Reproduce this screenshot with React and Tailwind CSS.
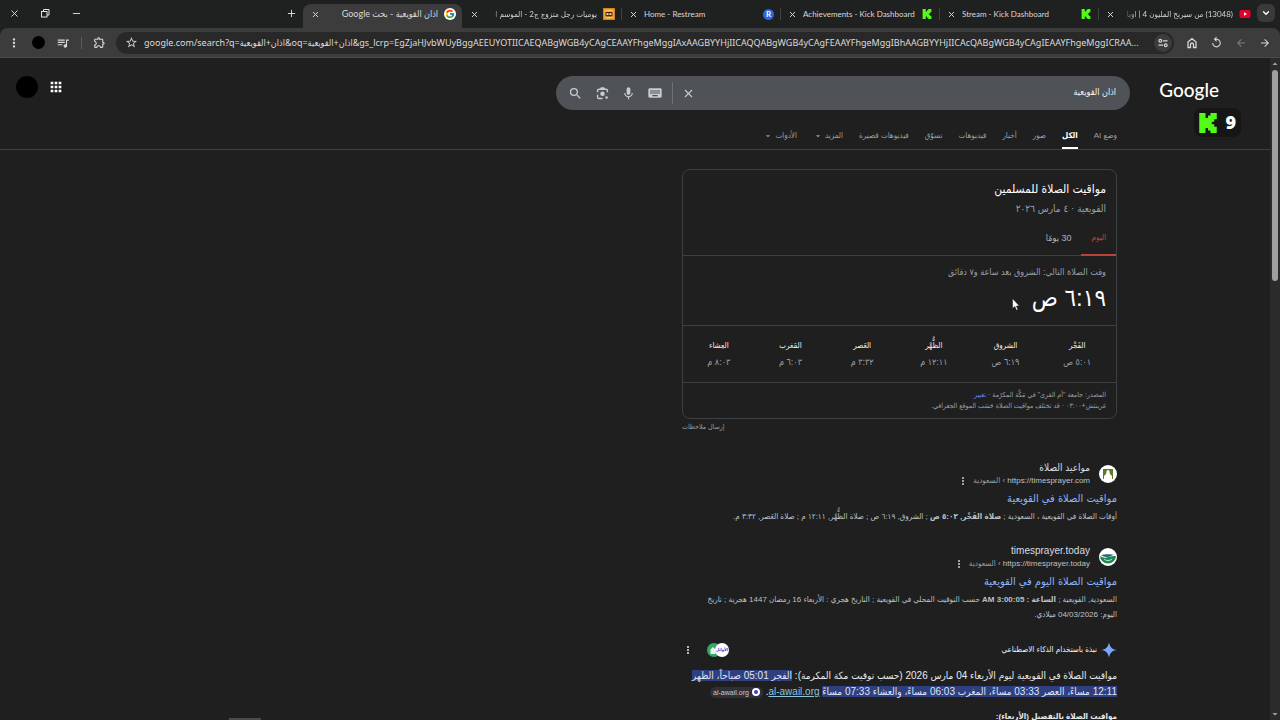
import { Plus, Minus, X, ChevronDown } from "lucide-react";
import { FcGoogle } from "react-icons/fc";
import {
  MdApps,
  MdArrowBack,
  MdArrowDropDown,
  MdArrowDropUp,
  MdArrowForward,
  MdKeyboard,
  MdMic,
  MdMoreVert,
  MdOutlineExtension,
  MdQueueMusic,
  MdReplay,
  MdSearch,
  MdStarBorder,
} from "react-icons/md";

const URL_TEXT =
  "google.com/search?q=اذان+القويعية&oq=اذان+القويعية&gs_lcrp=EgZjaHJvbWUyBggAEEUYOTIICAEQABgWGB4yCAgCEAAYFhgeMggIAxAAGBYYHjIICAQQABgWGB4yCAgFEAAYFhgeMggIBhAAGBYYHjIICAcQABgWGB4yCAgIEAAYFhgeMggICRAA...";

const TABS = [
  { title: "(13048) من سيربح المليون 4 | اوبا", dir: "rtl", icon: "youtube", fade: true },
  { title: "Stream - Kick Dashboard", dir: "ltr", icon: "kick" },
  { title: "Achievements - Kick Dashboard", dir: "ltr", icon: "kick" },
  { title: "Home - Restream", dir: "ltr", icon: "restream" },
  { title: "يوميات رجل متزوج ج2 - الموسم ا", dir: "rtl", icon: "show", fade: true },
  { title: "اذان القويعية - بحث Google", dir: "rtl", icon: "google", active: true },
];

const FILTERS = [
  { label: "وضع AI" },
  { label: "الكل", active: true },
  { label: "صور" },
  { label: "أخبار" },
  { label: "فيديوهات" },
  { label: "تسوّق" },
  { label: "فيديوهات قصيرة" },
  { label: "المزيد", menu: true },
  { label: "الأدوات", menu: true },
];

const PRAYERS = [
  { name: "الفَجْر", time: "٥:٠١ ص" },
  { name: "الشروق", time: "٦:١٩ ص" },
  { name: "الظُّهْر", time: "١٢:١١ م" },
  { name: "العَصر", time: "٣:٣٢ م" },
  { name: "المَغرب", time: "٦:٠٣ م" },
  { name: "العِشاء", time: "٨:٠٣ م" },
];

function KickLogo({ className }) {
  return (
    <svg viewBox="0 0 14 16" className={className} fill="#53fc18" aria-hidden="true">
      <path d="M0 0h5v4h2V2h2V0h5v5h-2v2h-2v2h2v2h2v5H9v-2H7v-2H5v4H0z" />
    </svg>
  );
}

function Favicon({ name }) {
  if (name === "google") {
    return (
      <span className="flex size-3 shrink-0 items-center justify-center rounded-full bg-white">
        <FcGoogle size={10} />
      </span>
    );
  }
  if (name === "kick") return <KickLogo className="mx-px h-[10px] w-[10px] shrink-0" />;
  if (name === "youtube") {
    return (
      <svg viewBox="0 0 12 12" className="size-3 shrink-0" aria-hidden="true">
        <rect x="0.5" y="2" width="11" height="8" rx="2" fill="#e8002d" />
        <path d="M5 4.3v3.4L8 6z" fill="#fff" />
      </svg>
    );
  }
  if (name === "restream") {
    return (
      <span className="flex size-[11px] shrink-0 items-center justify-center rounded-full bg-[#2a66e8] text-[8px] leading-none font-bold text-white">
        R
      </span>
    );
  }
  return (
    <svg viewBox="0 0 12 12" className="size-3 shrink-0" aria-hidden="true">
      <rect width="12" height="12" rx="1" fill="#f2b632" />
      <rect x="0.8" y="0.8" width="10.4" height="10.4" fill="none" stroke="#c9541c" strokeWidth="0.7" />
      <circle cx="6" cy="6" r="4.2" fill="#f7d35c" />
      <rect x="2.4" y="3.8" width="7.2" height="4.6" rx="1" fill="#5b1d12" />
      <path d="M3.5 5.2h2v1.8h-2zM6.5 5.2h2v1.8h-2z" fill="#ffe9a8" />
    </svg>
  );
}

function BrowserTab({ tab, divider }) {
  return (
    <div
      className={
        tab.active
          ? "flex h-6 w-[159px] min-w-0 items-center gap-[6px] rounded-t-lg bg-[#3c3c3c] pr-[6px] pb-1 pl-2 text-[9px]"
          : "relative flex h-6 w-[159px] min-w-0 items-center gap-[6px] pr-[6px] pb-1 pl-2 text-[8px]"
      }
    >
      <Favicon name={tab.icon} />
      <span
        dir={tab.dir}
        className={
          tab.fade
            ? "min-w-0 flex-1 mask-l-from-85% leading-3 whitespace-nowrap text-[#d0d0d0]"
            : "min-w-0 flex-1 leading-3 whitespace-nowrap text-[#d9d9d9]"
        }
      >
        {tab.title}
      </span>
      <button type="button" aria-label="إغلاق علامة التبويب" className="text-[#dedede]">
        <X size={9} strokeWidth={2.5} />
      </button>
      {divider && <span className="absolute top-1 left-0 h-3 w-px bg-[#414141]" />}
    </div>
  );
}

function TabStrip() {
  return (
    <div className="flex h-7 items-end bg-[#1f2020] pr-[5px]">
      <button
        type="button"
        aria-label="البحث في علامات التبويب"
        className="mb-[6px] flex size-[18px] shrink-0 items-center justify-center rounded-md bg-[#3a3a3a] text-white"
      >
        <ChevronDown size={10} strokeWidth={3} />
      </button>
      <div className="flex min-w-0">
        {TABS.map((tab, i) => (
          <BrowserTab key={tab.title} tab={tab} divider={i < 4} />
        ))}
      </div>
      <button type="button" aria-label="علامة تبويب جديدة" className="mr-[6px] mb-[9px] text-[#e3e3e3]">
        <Plus size={11} strokeWidth={2} />
      </button>
      <div className="mr-auto mb-[9px] flex items-center gap-5 pl-[9px] text-[#e3e3e3]">
        <button type="button" aria-label="تصغير">
          <Minus size={11} strokeWidth={2} />
        </button>
        <button type="button" aria-label="استعادة">
          <svg viewBox="0 0 11 11" className="size-[11px]" fill="none" stroke="currentColor" aria-hidden="true">
            <rect x="1.5" y="3.5" width="5.5" height="5.5" />
            <path d="M3.5 3.5v-2h5.5v5.5H7" />
          </svg>
        </button>
        <button type="button" aria-label="إغلاق">
          <X size={11} strokeWidth={2} />
        </button>
      </div>
    </div>
  );
}

function Toolbar() {
  return (
    <div className="bg-[#1f2020]">
      <div className="flex h-[30px] items-center rounded-t-lg border-b border-[#4b4b4b] bg-[#3c3c3c] pr-[10px] pl-[7px] text-[#d6d6d6]">
        <div className="flex items-center gap-3 pl-3">
          <button type="button" aria-label="التالي" className="-mr-px">
            <MdArrowForward size={12} />
          </button>
          <button type="button" aria-label="السابق" className="text-[#7c7c7c]">
            <MdArrowBack size={12} />
          </button>
          <button type="button" aria-label="إعادة التحميل">
            <MdReplay size={13} />
          </button>
          <button type="button" aria-label="الصفحة الرئيسية">
            <svg viewBox="0 0 12 12" className="size-3" fill="none" stroke="currentColor" strokeWidth="1.3" aria-hidden="true">
              <path d="M2 5l4-3.300L10 5v5.500H7.500v-3a1.500 1.500 0 0 0-3 0v3H2z" />
            </svg>
          </button>
        </div>
        <div className="flex h-[22px] min-w-0 flex-1 items-center gap-[6px] rounded-full bg-[#282828] pr-[2px] pl-[9px]">
          <button
            type="button"
            aria-label="معلومات الموقع"
            className="flex size-[18px] shrink-0 items-center justify-center rounded-full bg-[#3c3c3c]"
          >
            <svg viewBox="0 0 10 10" className="size-[10px]" fill="none" stroke="currentColor" strokeWidth="1.2" aria-hidden="true">
              <circle cx="2.3" cy="2.8" r="1.4" />
              <path d="M5 2.8h4.5M0.5 7.2H5" />
              <circle cx="7.7" cy="7.2" r="1.4" />
            </svg>
          </button>
          <input
            dir="ltr"
            aria-label="شريط العناوين"
            defaultValue={URL_TEXT}
            className="h-4 min-w-0 flex-1 bg-transparent font-['Noto_Sans','DejaVu_Sans_Condensed','DejaVu_Sans',sans-serif] text-[9px] text-ellipsis text-[#dcdcdc] outline-none"
          />
          <button type="button" aria-label="إضافة إشارة">
            <MdStarBorder size={13} />
          </button>
        </div>
        <div className="flex items-center gap-[10px] pr-[10px]">
          <button type="button" aria-label="الإضافات">
            <MdOutlineExtension size={13} />
          </button>
          <span className="mx-px h-3 w-px bg-[#5c5c5c]" />
          <button type="button" aria-label="الوسائط">
            <MdQueueMusic size={14} />
          </button>
          <button type="button" aria-label="الملف الشخصي" className="mx-px size-[13px] rounded-full bg-black" />
          <button type="button" aria-label="القائمة">
            <MdMoreVert size={14} />
          </button>
        </div>
      </div>
    </div>
  );
}

function LensIcon() {
  return (
    <svg viewBox="0 0 24 24" className="size-[15px]" fill="currentColor" aria-hidden="true">
      <path d="M3 10V7.5A3.5 3.5 0 0 1 6.500 4H8l1.500-2h5L16 4h1.500A3.500 3.500 0 0 1 21 7.500V10h-2.200V7.500A1.300 1.300 0 0 0 17.500 6.200h-11A1.300 1.300 0 0 0 5.200 7.500V10zM3 14h2.200v3.500a1.300 1.300 0 0 0 1.300 1.300H12V21H6.500A3.500 3.500 0 0 1 3 17.500z" />
      <circle cx="12" cy="12.500" r="3.600" />
      <circle cx="18.500" cy="18.500" r="2" />
    </svg>
  );
}

function SearchHeader() {
  return (
    <header className="relative border-b border-[#3c4043]">
      <div className="flex items-center pt-[18px]">
        <div className="w-[140px] shrink-0 pr-[51px] pb-[6px]">
          <a href="#home" dir="ltr" className="block text-right font-[Lato] text-[19px] leading-7 font-medium text-white">
            Google
          </a>
        </div>
        <form className="flex h-[34px] w-[574px] items-center rounded-full bg-[#4f5357] pr-[14px] pl-3 text-[#c9ccd0]">
          <input
            type="text"
            aria-label="بحث"
            defaultValue="اذان القويعية"
            className="min-w-0 flex-1 bg-transparent text-[9px] text-[#f1f1f1] outline-none"
          />
          <button type="button" aria-label="محو">
            <X size={13} strokeWidth={2} />
          </button>
          <span className="mx-[9px] h-[22px] w-px bg-[#6d7175]" />
          <div className="flex items-center gap-3">
            <button type="button" aria-label="أدوات الإدخال">
              <MdKeyboard size={16} />
            </button>
            <button type="button" aria-label="البحث الصوتي" className="-mx-px">
              <MdMic size={15} />
            </button>
            <button type="button" aria-label="البحث بالصور">
              <LensIcon />
            </button>
            <button type="submit" aria-label="بحث Google">
              <MdSearch size={15} />
            </button>
          </div>
        </form>
        <div className="mr-auto mb-3 flex items-center gap-[10px] pl-4 text-white">
          <button type="button" aria-label="تطبيقات Google">
            <MdApps size={16} />
          </button>
          <button type="button" aria-label="الحساب" className="size-[22px] rounded-full bg-black" />
        </div>
      </div>
      <nav className="flex gap-4 pt-[18px] pr-[153px] text-[8px] leading-4 text-[#9aa0a6]">
        {FILTERS.map((f) => (
          <a
            key={f.label}
            href="#filter"
            className={
              f.active
                ? "border-b-2 border-white pb-[3px] font-bold text-white"
                : "flex items-center border-b-2 border-transparent pb-[3px]"
            }
          >
            {f.label}
            {f.menu && <MdArrowDropDown size={10} className="mr-[2px]" />}
          </a>
        ))}
      </nav>
      <div
        dir="ltr"
        className="absolute top-[50px] right-[29px] flex h-[29px] items-center gap-2 rounded-lg bg-[#151615] px-[5px] font-['Open_Sans'] text-[18px] font-extrabold text-white"
      >
        <KickLogo className="h-5 w-[18px]" />9
      </div>
    </header>
  );
}

function PrayerCard() {
  return (
    <section>
      <div className="rounded-lg border border-[#3c4043]">
        <div className="px-[10px] pt-[9px]">
          <h2 className="text-[12px] leading-5 text-white">مواقيت الصلاة للمسلمين</h2>
          <p className="text-[10px] leading-5 text-[#9aa0a6]">القويعية · ٤ مارس ٢٠٢٦</p>
        </div>
        <div className="flex border-b border-[#3c4043] pt-[9px] leading-5">
          <button type="button" className="-mb-px border-b-2 border-[#b8433c] px-[10px] pb-[6px] text-[8px] text-[#d93b33]">
            اليوم
          </button>
          <button type="button" className="-mb-px border-b-2 border-transparent px-[10px] pb-[6px] text-[9px] text-[#b0b4b8]">
            30 يومًا
          </button>
        </div>
        <div className="border-b border-[#3c4043] px-[10px] pt-[6px] pb-[11px]">
          <p className="text-[9px] leading-5 text-[#9aa0a6]">وقت الصلاة التالي: الشروق بعد ساعة و٧ دقائق</p>
          <p className="text-[24px] leading-8 text-white">٦:١٩ ص</p>
        </div>
        <ul className="grid grid-cols-6 border-b border-[#3c4043] py-3 pr-[3px] text-center leading-4">
          {PRAYERS.map((p) => (
            <li key={p.name}>
              <div className="text-[8px] text-[#f1f1f1]">{p.name}</div>
              <div className="text-[9px] text-[#9aa0a6]">{p.time}</div>
            </li>
          ))}
        </ul>
        <div className="px-[10px] pt-[6px] pb-[7px] text-[7px] leading-[11px] text-[#9aa0a6]">
          <p>
            المصدر: جامعة "أم القرى" في مَكَّة المكرّمة ·{" "}
            <a href="#change" className="text-[#5a8cf0]">
              تغيير
            </a>
          </p>
          <p>غرينتش+٠٣:٠٠ · قد تختلف مواقيت الصلاة حَسَب الموقع الجغرافي.</p>
        </div>
      </div>
      <div className="flex justify-end">
        <a href="#feedback" className="text-[7px] leading-4 text-[#9aa0a6]">
          إرسال ملاحظات
        </a>
      </div>
    </section>
  );
}

function Result({ icon, site, url, title, children }) {
  return (
    <article>
      <div className="flex items-center gap-[9px]">
        <span className="flex size-[18px] shrink-0 items-center justify-center rounded-full bg-white">{icon}</span>
        <div>
          <div className="text-[10px] leading-[14px] text-[#dadce0]">{site}</div>
          <div className="flex items-center text-[8px] leading-3 text-[#bdc1c6]">
            <cite className="not-italic">
              <bdi>{url}</bdi> <span className="text-[#9aa0a6]">› السعودية</span>
            </cite>
            <button type="button" aria-label="حول هذه النتيجة" className="mr-1">
              <MdMoreVert size={12} />
            </button>
          </div>
        </div>
      </div>
      <h3 className="mt-px mb-px text-[11px] leading-5 text-[#8ab4f8]">
        <a href="#result">{title}</a>
      </h3>
      <p className="text-[8px] leading-[15px] text-[#bdc1c6]">{children}</p>
    </article>
  );
}

function AiOverview() {
  return (
    <section>
      <div className="flex items-center">
        <svg viewBox="0 0 14 14" className="size-4" fill="#7aa7f7" aria-hidden="true">
          <path d="M7 0c.5 4 2.500 6.500 7 7-4.500.5-6.500 3-7 7-.5-4-2.500-6.500-7-7 4.500-.5 6.500-3 7-7z" />
        </svg>
        <h3 className="mr-1 text-[8px] leading-4 text-[#f1f3f4]">نبذة باستخدام الذكاء الاصطناعي</h3>
        <div className="mr-auto flex items-center">
          <span className="z-10 flex size-[14px] items-center justify-center rounded-full bg-white text-[4px] font-bold text-[#3a2fd0]">
            الأوائل
          </span>
          <svg viewBox="0 0 14 14" className="-mr-[6px] size-[14px]" aria-hidden="true">
            <circle cx="7" cy="7" r="7" fill="#35a869" />
            <path d="M3.500 11V6.500L6 4l2.500 2.500V11z" fill="#e8f5ec" />
          </svg>
          <button type="button" aria-label="المزيد من الخيارات" className="mr-[13px] text-[#dadce0]">
            <MdMoreVert size={12} />
          </button>
        </div>
      </div>
      <p className="mt-[10px] text-[10px] leading-4 whitespace-nowrap text-[#e8eaed]">
        مواقيت الصلاة في القويعية ليوم الأربعاء 04 مارس 2026 (حسب توقيت مكة المكرمة):{" "}
        <mark className="bg-[#303f7d] text-[#dfe5fb]">الفجر 05:01 صباحاً، الظهر</mark>
        <br />
        <mark className="bg-[#303f7d] text-[#dfe5fb]">
          12:11 مساءً، العصر 03:33 مساءً، المغرب 06:03 مساءً، والعشاء 07:33 مساءً
        </mark>{" "}
        <a href="#source" className="text-[#8ec5dc] underline">
          al-awail.org
        </a>
        .{" "}
        <a
          href="#source-chip"
          className="inline-flex items-center gap-[3px] rounded-full bg-[#2e2f37] px-[3px] align-middle text-[7px] leading-[11px] text-[#c8cad0]"
        >
          <span className="size-2 rounded-full border-2 border-white bg-[#4438c8]" />
          al-awail.org
        </a>
      </p>
      <h4 className="mt-[9px] text-[8px] leading-4 font-bold text-[#e8eaed]">مواقيت الصلاة بالتفصيل (الأربعاء):</h4>
    </section>
  );
}

function Scrollbar() {
  return (
    <div className="flex w-[10px] shrink-0 flex-col items-center justify-between bg-[#2b2b2b] text-[#a3a3a3]">
      <div className="flex w-full flex-col items-center">
        <MdArrowDropUp size={12} />
        <div className="h-[211px] w-[6px] rounded-full bg-[#9f9f9f]" />
      </div>
      <MdArrowDropDown size={12} />
    </div>
  );
}

export default function App() {
  return (
    <div
      dir="rtl"
      lang="ar"
      className="relative flex h-screen flex-col overflow-hidden bg-[#1f1f1f] font-['Liberation_Sans','DejaVu_Sans_Condensed','DejaVu_Sans',sans-serif]"
    >
      <div className="font-['Lato','DejaVu_Sans_Condensed','DejaVu_Sans',sans-serif]">
        <TabStrip />
        <Toolbar />
      </div>

      <div className="flex min-h-0 flex-1">
        <Scrollbar />
        <div className="min-w-0 flex-1 overflow-hidden">
          <SearchHeader />
          <main className="mt-[19px] mr-[153px] w-[435px]">
            <PrayerCard />
            <div className="mt-[26px] flex flex-col gap-5">
              <Result
                site="مواعيد الصلاة"
                url="https://timesprayer.com"
                title="مواقيت الصلاة في القويعية"
                icon={
                  <svg viewBox="0 0 12 12" className="size-3" aria-hidden="true">
                    <rect x="1" y="1" width="10" height="10" fill="#5d7a27" />
                    <path d="M2 11V8l2-2 .6-2h2.800L8 6l2 2v3z" fill="#fff" />
                    <circle cx="6" cy="3.500" r="1.500" fill="#fff" />
                  </svg>
                }
              >
                أوقات الصلاة في القويعية ، السعودية ; <b>صلاة الفَجْر, ٥:٠٢ ص</b> ; الشروق, ٦:١٩ ص ; صلاة الظُّهْر,
                ١٢:١١ م ; صلاة العَصر, ٣:٣٢ م.
              </Result>
              <Result
                site="timesprayer.today"
                url="https://timesprayer.today"
                title="مواقيت الصلاة اليوم في القويعية"
                icon={
                  <svg viewBox="0 0 16 16" className="size-4" aria-hidden="true">
                    <path d="M0 7c3 2 6 2 8 1s5-1 8-1a8 7.500 0 0 1-16 0z" fill="#1f8a52" />
                    <path d="M1 6c4-1 10-1 14 0-4 0-5 2-8 2S3 7 1 6z" fill="#2d5f86" />
                    <path d="M4 10c2 2 6 2 8 0" fill="none" stroke="#bfe8c9" />
                  </svg>
                }
              >
                السعودية, القويعية ; <b>الساعة : 3:00:05 AM</b> حسب التوقيت المحلي في القويعية ; التاريخ هجري : الأربعاء
                16 رمضان 1447 هجرية ; تاريخ
                <br />
                اليوم: 04/03/2026 ميلادي.
              </Result>
              <AiOverview />
            </div>
          </main>
        </div>
      </div>

      {/* mouse pointer */}
      <svg viewBox="0 0 8 13" className="absolute top-[298px] right-[260px] h-[13px] w-2" aria-hidden="true">
        <path d="M.5.5v10l2.300-2 1.700 3.800 1.500-.7L4.400 8h3z" fill="#fff" stroke="#111" strokeWidth="0.500" />
      </svg>
      <div className="absolute bottom-0 left-[229px] h-[2px] w-8 bg-[#4a4a4a]" />
    </div>
  );
}
